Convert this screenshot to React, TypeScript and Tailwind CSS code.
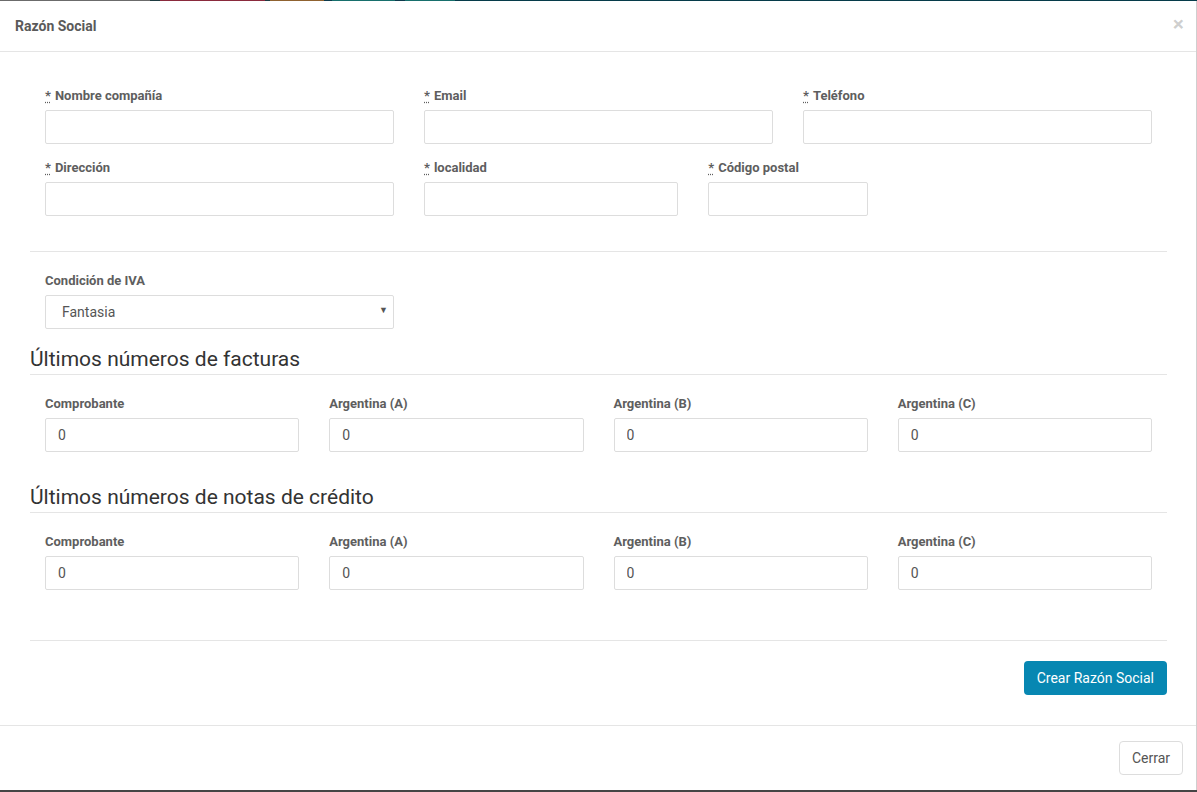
import { ChangeEvent, useState } from 'react';

type Campo = { id: string; label: string; requerido?: boolean; span: string };

const FILA_1: Campo[] = [
  { id: 'nombre', label: 'Nombre compañía', requerido: true, span: 'col-span-4' },
  { id: 'email', label: 'Email', requerido: true, span: 'col-span-4' },
  { id: 'telefono', label: 'Teléfono', requerido: true, span: 'col-span-4' },
];

const FILA_2: Campo[] = [
  { id: 'direccion', label: 'Dirección', requerido: true, span: 'col-span-4' },
  { id: 'localidad', label: 'localidad', requerido: true, span: 'col-span-3' },
  { id: 'cp', label: 'Código postal', requerido: true, span: 'col-span-2' },
];

const NUMERADORES = ['Comprobante', 'Argentina (A)', 'Argentina (B)', 'Argentina (C)'];

const inputCls =
  'block w-full h-[34px] px-[12px] rounded-[2px] border border-[#dddddd] bg-white text-[14px] text-[#555] outline-none';

function Label({ texto, requerido }: { texto: string; requerido?: boolean }) {
  return (
    <label className="block text-[13px] font-bold leading-[18px] text-[#5e5e5e] mb-[5px]">
      {requerido && (
        <abbr title="requerido" className="underline decoration-dotted underline-offset-2 mr-[4px]">
          *
        </abbr>
      )}
      {texto}
    </label>
  );
}

function Numeradores({ prefijo }: { prefijo: string }) {
  const [valores, setValores] = useState<string[]>(['0', '0', '0', '0']);

  const cambiar = (i: number) => (e: ChangeEvent<HTMLInputElement>) => {
    const copia = [...valores];
    copia[i] = e.target.value;
    setValores(copia);
  };

  return (
    <div className="grid grid-cols-12 gap-x-[30px] px-[15px]">
      {NUMERADORES.map((n, i) => (
        <div key={prefijo + n} className="col-span-3">
          <Label texto={n} />
          <input className={inputCls} value={valores[i]} onChange={cambiar(i)} />
        </div>
      ))}
    </div>
  );
}

export default function App() {
  return (
    <div
      className="w-[1197px] h-[792px] flex flex-col bg-white overflow-hidden"
      style={{ fontFamily: 'Roboto, "Liberation Sans", Arial, sans-serif' }}
    >
      {/* franja del fondo que asoma arriba */}
      <div className="flex h-px shrink-0">
        <div className="w-[150px] bg-[#6b6b6b]" />
        <div className="w-[10px] bg-[#1e3a40]" />
        <div className="w-[105px] bg-[#8a2a3c]" />
        <div className="w-[5px] bg-[#1e3a40]" />
        <div className="w-[54px] bg-[#8f6230]" />
        <div className="w-[8px] bg-[#0d3a4c]" />
        <div className="w-[63px] bg-[#176f6c]" />
        <div className="w-[10px] bg-[#0d3a4c]" />
        <div className="w-[50px] bg-[#176f6c]" />
        <div className="flex-1 bg-[#063b4a]" />
      </div>

      <div className="flex-1 flex flex-col border-r border-[#cfcfcf]">
        {/* Header */}
        <div className="flex items-center justify-between h-[51px] pl-[15px] pr-[12px] border-b border-[#e5e5e5] shrink-0">
          <h4 className="text-[14px] font-bold leading-[20px] text-[#5a5a5a]">Razón Social</h4>
          <button className="text-[21px] font-bold leading-none text-black/20 -mt-[3px]">×</button>
        </div>

        {/* Body */}
        <div className="pl-[30px] pr-[29px] pt-[35px] pb-[30px]">
          <div className="grid grid-cols-12 gap-x-[30px] px-[15px] mb-[15px]">
            {FILA_1.map((c) => (
              <div key={c.id} className={c.span}>
                <Label texto={c.label} requerido={c.requerido} />
                <input className={inputCls} />
              </div>
            ))}
          </div>
          <div className="grid grid-cols-12 gap-x-[30px] px-[15px]">
            {FILA_2.map((c) => (
              <div key={c.id} className={c.span}>
                <Label texto={c.label} requerido={c.requerido} />
                <input className={inputCls} />
              </div>
            ))}
          </div>

          <hr className="mt-[35px] mb-[20px] border-t border-[#e5e5e5]" />

          <div className="grid grid-cols-12 gap-x-[30px] px-[15px] mb-[15px]">
            <div className="col-span-4">
              <Label texto="Condición de IVA" />
              <div className="relative">
                <select className={inputCls + ' appearance-none pl-[16px]'} defaultValue="Fantasia">
                  <option>Fantasia</option>
                  <option>Responsable Inscripto</option>
                  <option>Monotributo</option>
                  <option>Exento</option>
                </select>
                <span className="pointer-events-none absolute right-[6px] top-[9px] text-[9px] text-[#555]">▼</span>
              </div>
            </div>
          </div>

          <h3 className="text-[21px] leading-[30px] text-[#333] border-b border-[#e5e5e5] mb-[20px]">
            Últimos números de facturas
          </h3>
          <Numeradores prefijo="fac" />

          <h3 className="text-[21px] leading-[30px] text-[#333] border-b border-[#e5e5e5] mt-[30px] mb-[20px]">
            Últimos números de notas de crédito
          </h3>
          <Numeradores prefijo="nc" />

          <hr className="mt-[50px] mb-[20px] border-t border-[#e5e5e5]" />

          <div className="flex justify-end">
            <button className="h-[34px] px-[13px] rounded-[4px] bg-[#0787b2] text-white text-[14px]">
              Crear Razón Social
            </button>
          </div>
        </div>

        {/* Footer */}
        <div className="flex justify-end pl-[14px] pr-[13px] pt-[15px] border-t border-[#e5e5e5]">
          <button className="h-[34px] px-[12px] rounded-[4px] border border-[#dddddd] bg-white text-[14px] text-[#555]">
            Cerrar
          </button>
        </div>
      </div>

      <div className="h-[2px] shrink-0 bg-[#454545]" />
    </div>
  );
}
